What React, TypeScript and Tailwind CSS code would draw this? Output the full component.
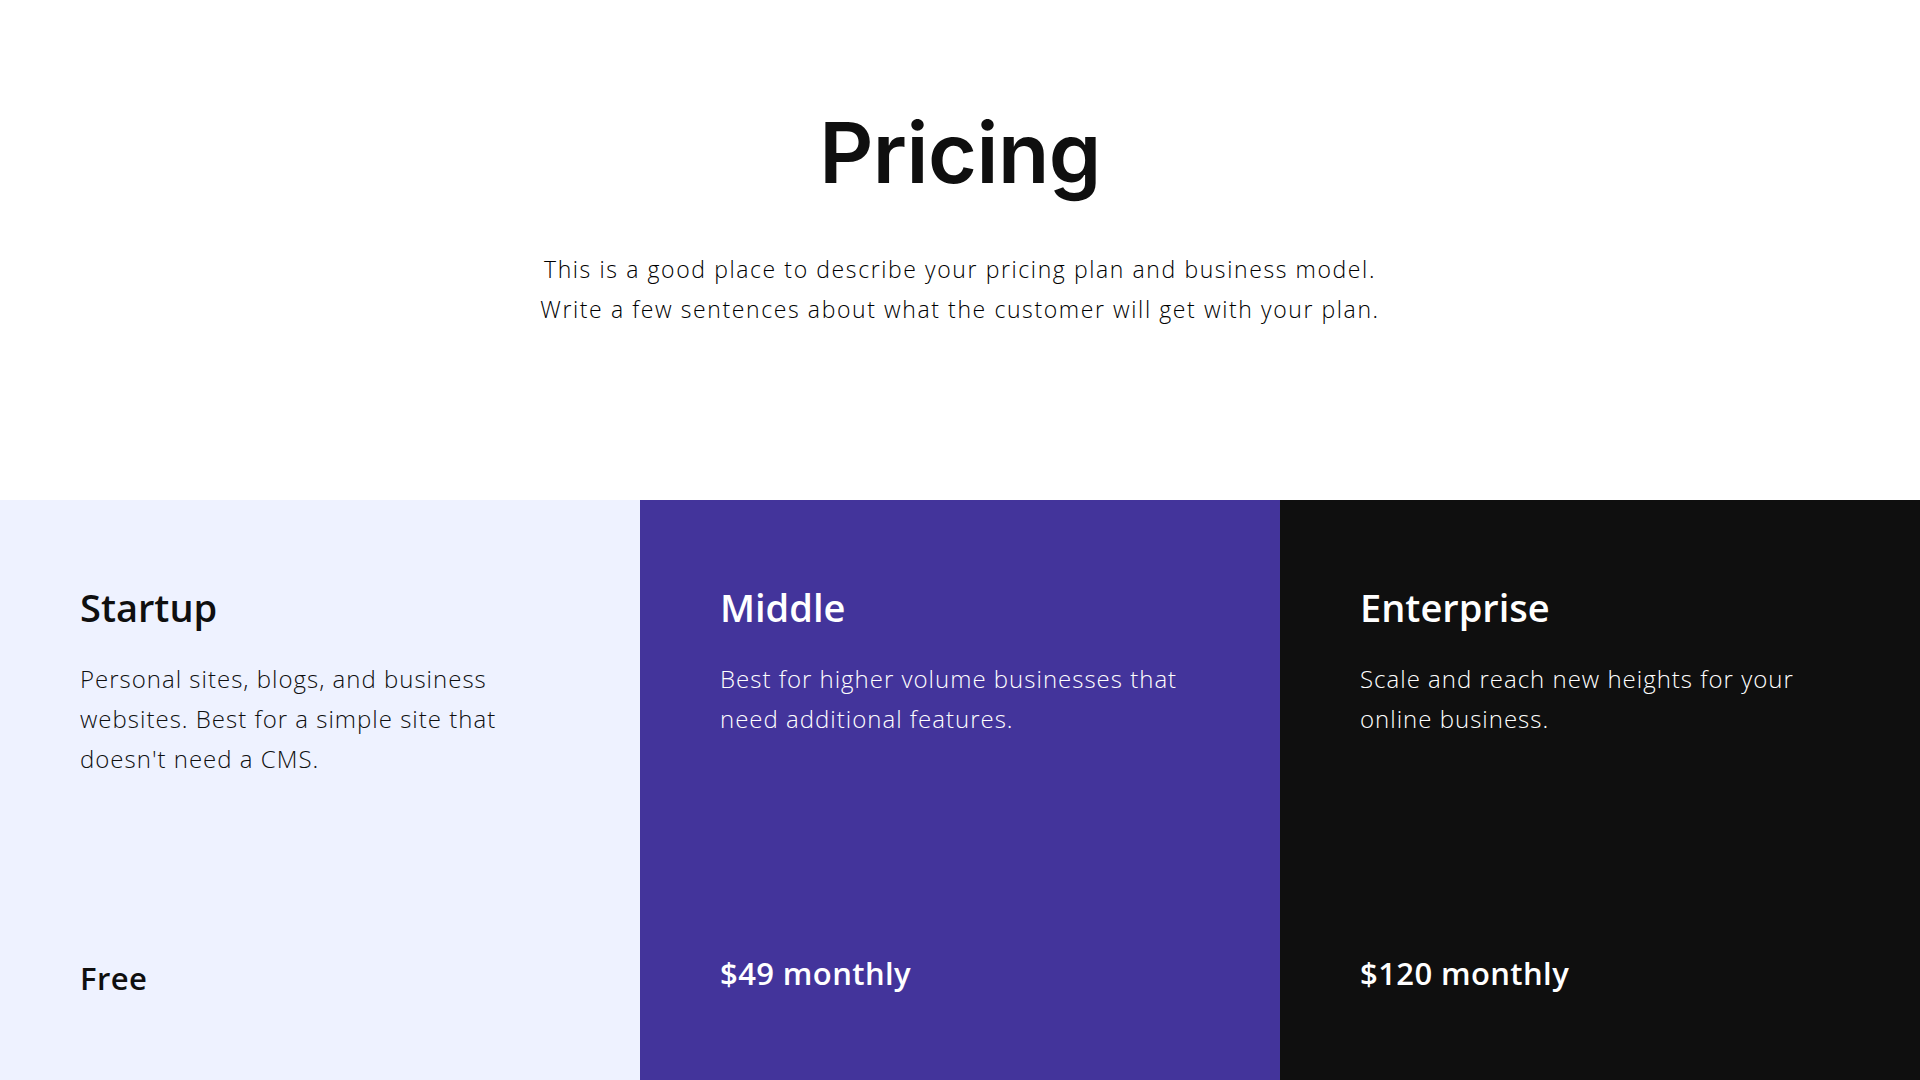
import React from "react";

const body = { fontFamily: '"Open Sans", "Liberation Sans", sans-serif' };

type Plan = {
  name: string;
  desc: string;
  price: string;
  bg: string;
  text: string;
  pb: string;
};

const plans: Plan[] = [
  {
    name: "Startup",
    desc: "Personal sites, blogs, and business websites. Best for a simple site that doesn't need a CMS.",
    price: "Free",
    bg: "bg-[#eef2ff]",
    text: "text-[#0f0f0f]",
    pb: "pb-[84px]",
  },
  {
    name: "Middle",
    desc: "Best for higher volume businesses that need additional features.",
    price: "$49 monthly",
    bg: "bg-[#43349b]",
    text: "text-white",
    pb: "pb-[89px]",
  },
  {
    name: "Enterprise",
    desc: "Scale and reach new heights for your online business.",
    price: "$120 monthly",
    bg: "bg-[#0f0f0f]",
    text: "text-white",
    pb: "pb-[89px]",
  },
];

export default function App() {
  return (
    <div className="w-[1920px] h-[1080px] bg-white flex flex-col overflow-hidden" style={body}>
      <section className="h-[500px] flex flex-col items-center pt-[111px]">
        <h1
          className="text-[84px] leading-none font-semibold text-[#0f0f0f] tracking-[-0.5px]"
          style={{ fontFamily: 'Inter, "Liberation Sans", sans-serif' }}
        >
          Pricing
        </h1>
        <p className="mt-[54px] text-[23px] leading-[40px] font-light text-black text-center tracking-[1.6px]">
          This is a good place to describe your pricing plan and business model.
          <br />
          Write a few sentences about what the customer will get with your plan.
        </p>
      </section>
      <section className="flex-1 grid grid-cols-3">
        {plans.map((p) => (
          <div key={p.name} className={`${p.bg} ${p.text} flex flex-col pl-[80px] pr-[60px] pt-[85px] ${p.pb}`}>
            <h2 className="text-[38px] leading-[44px] font-semibold">{p.name}</h2>
            <p className="mt-[30px] text-[24px] leading-[40px] font-light max-w-[470px] tracking-[1px]">{p.desc}</p>
            <div className="mt-auto text-[31px] leading-[36px] font-semibold tracking-[0.4px]">{p.price}</div>
          </div>
        ))}
      </section>
    </div>
  );
}
